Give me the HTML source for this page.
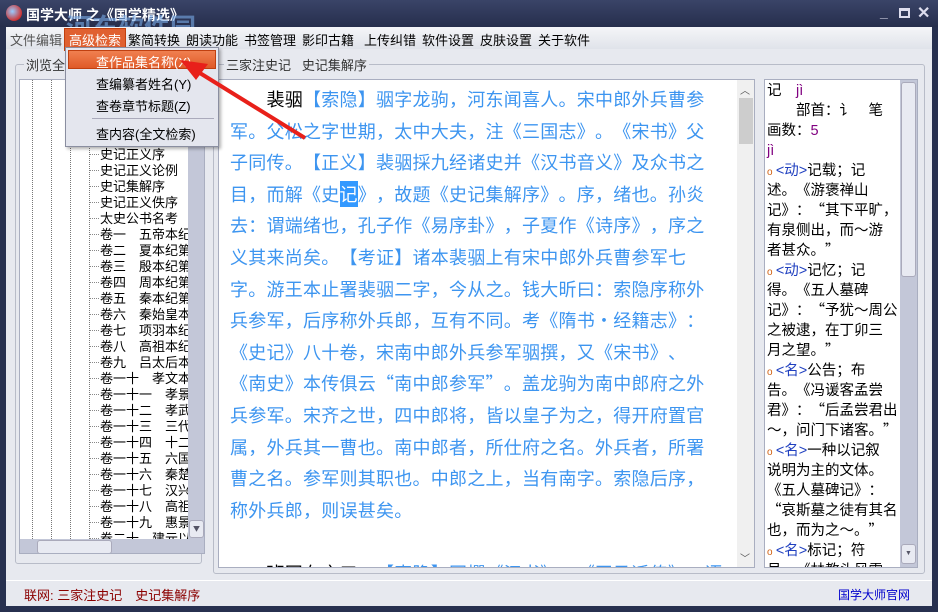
<!DOCTYPE html>
<html><head><meta charset="utf-8"><style>
*{margin:0;padding:0;box-sizing:border-box}
body{width:938px;height:612px;overflow:hidden;background:#27304f;font-family:"Liberation Sans","Noto Sans CJK SC",sans-serif;position:relative;text-spacing-trim:space-all}
.abs{position:absolute}
#title{left:0;top:0;width:938px;height:27px;background:linear-gradient(#3a4468,#262e4c);color:#fff;font-size:14px;font-weight:bold}
#client{left:6px;top:27px;width:926px;height:579px;background:#e7e9ef}
#menu{left:6px;top:27px;width:926px;height:22px;background:linear-gradient(#f4f5f8,#e0e3ea);font-size:13px}
#menu span{position:absolute;top:3px;color:#000}
.panel{background:#fff;border:1px solid #a9aec0}
#tree{left:19px;top:79px;width:186px;height:475px;overflow:hidden;font-size:13px;font-family:"Noto Sans CJK SC",sans-serif}
.row{position:absolute;left:80px;height:16px;line-height:16px;white-space:nowrap}
.row:before{content:"";position:absolute;left:-10px;top:8px;width:9px;border-top:1px dotted #888}
.vl{position:absolute;top:0;height:475px;border-left:1px dotted #777}
#main{left:218px;top:79px;width:537px;height:489px;overflow:hidden}
.cjk{font-family:"Noto Sans CJK SC",sans-serif;text-spacing-trim:space-all;font-feature-settings:"fwid" 1;font-variant-east-asian:full-width}
#mt{position:absolute;left:11px;top:4px;font-size:18px;line-height:31.6px;color:#3d95f0;white-space:nowrap;letter-spacing:0.25px}
#right{left:764px;top:79px;width:154px;height:489px;overflow:hidden}
#rt{position:absolute;left:2px;top:0;font-family:"Noto Sans CJK SC",sans-serif;text-spacing-trim:space-all;font-size:14.5px;white-space:nowrap;color:#000}
#rt div{height:20px;line-height:20px;overflow:visible}
.o{color:#d06010;font-size:10px;font-family:"Liberation Sans",sans-serif}
.tag{color:#2040c0;font-family:"Liberation Sans",sans-serif}
.py{color:#800080;font-family:"Liberation Sans",sans-serif}
#status{left:6px;top:580px;width:926px;height:26px;background:#e7e9ef;border-top:1px solid #fff;font-size:13px}
</style></head><body>
<div id="title" class="abs">
 <div class="abs" style="left:6px;top:5px;width:16px;height:16px;border-radius:50%;background:radial-gradient(circle at 40% 40%,#9cf,#c33 70%,#600)"></div>
 <div class="abs" style="left:26px;top:5px">国学大师 之《国学精选》</div>
 <div class="abs" style="left:66px;top:8px;color:rgba(120,170,230,.6);font-size:26px">河东软件园</div>
 <div class="abs" style="left:880px;top:4px;font-size:14px;color:#dde">_</div>
 <div class="abs" style="left:899px;top:8px;width:11px;height:10px;border:2px solid #dde;border-top-width:3px"></div>
 <div class="abs" style="left:917px;top:3px;font-size:16px;color:#dde">✕</div>
</div>
<div id="client" class="abs"></div>
<div id="menu" class="abs">
 <span style="left:4px;color:#555">文件编辑</span>
 <span style="left:58px;top:1px;background:#e06030;color:#fff;padding:1px 4px;border:1px solid #c04010">高级检索</span>
 <span style="left:122px">繁简转换</span><span style="left:180px">朗读功能</span><span style="left:238px">书签管理</span><span style="left:296px">影印古籍</span><span style="left:358px">上传纠错</span><span style="left:416px">软件设置</span><span style="left:474px">皮肤设置</span><span style="left:532px">关于软件</span>
</div>
<div class="abs" style="left:70px;top:51px;color:#6c6;font-size:16px;font-weight:bold;opacity:.7">www.pc0359.cn</div>
<div class="abs" style="left:15px;top:64px;width:187px;height:500px;border:1px solid #b8bcc8;border-radius:3px"></div>
<div class="abs" style="left:213px;top:64px;width:712px;height:510px;border:1px solid #b8bcc8;border-radius:3px"></div>
<div class="abs" style="left:24px;top:55px;font-size:13px;background:#e7e9ef;color:#333;padding:0 2px">浏览全部</div>
<div class="abs" style="left:224px;top:55px;font-size:13px;background:#e7e9ef;color:#333;padding:0 2px">三家注史记 &nbsp; 史记集解序</div>
<div id="tree" class="abs panel">
 <div class="vl" style="left:12px"></div><div class="vl" style="left:31px"></div><div class="vl" style="left:50px"></div><div class="vl" style="left:69px"></div>
 <div class="row" style="top:66px">史记正义序</div>
 <div class="row" style="top:82px">史记正义论例</div>
 <div class="row" style="top:98px">史记集解序</div>
 <div class="row" style="top:114px">史记正义佚序</div>
 <div class="row" style="top:130px">太史公书名考</div>
 <div class="row" style="top:146px">卷一　五帝本纪第一</div>
 <div class="row" style="top:162px">卷二　夏本纪第二</div>
 <div class="row" style="top:178px">卷三　殷本纪第三</div>
 <div class="row" style="top:194px">卷四　周本纪第四</div>
 <div class="row" style="top:210px">卷五　秦本纪第五</div>
 <div class="row" style="top:226px">卷六　秦始皇本纪</div>
 <div class="row" style="top:242px">卷七　项羽本纪第</div>
 <div class="row" style="top:258px">卷八　高祖本纪第</div>
 <div class="row" style="top:274px">卷九　吕太后本纪</div>
 <div class="row" style="top:290px">卷一十　孝文本纪</div>
 <div class="row" style="top:306px">卷一十一　孝景本</div>
 <div class="row" style="top:322px">卷一十二　孝武本</div>
 <div class="row" style="top:338px">卷一十三　三代世</div>
 <div class="row" style="top:354px">卷一十四　十二诸</div>
 <div class="row" style="top:370px">卷一十五　六国年</div>
 <div class="row" style="top:386px">卷一十六　秦楚之</div>
 <div class="row" style="top:402px">卷一十七　汉兴以</div>
 <div class="row" style="top:418px">卷一十八　高祖功</div>
 <div class="row" style="top:434px">卷一十九　惠景间</div>
 <div class="row" style="top:450px">卷二十　建元以来</div>
 <div class="row" style="top:466px">卷二十一　建元已</div>
 <div class="abs" style="left:168px;top:0;width:17px;height:459px;background:#c3c7d8"></div>
 <div class="abs" style="left:169px;top:0;width:15px;height:34px;background:#e8eaf2;border:1px solid #aab;border-radius:3px"></div>
 <div class="abs" style="left:169px;top:440px;width:15px;height:18px;background:#e8eaf2;border:1px solid #aab;border-radius:3px;font-size:7px;text-align:center;line-height:16px;color:#556">▼</div>
 <div class="abs" style="left:0;top:459px;width:185px;height:15px;background:#c3c7d8"></div>
 <div class="abs" style="left:17px;top:460px;width:75px;height:14px;background:#e8eaf2;border:1px solid #aab;border-radius:3px"></div>
</div>
<div id="main" class="abs panel">
 <div id="mt" class="cjk"><span style="color:#000">　　裴骃</span>【索隐】骃字龙驹，河东闻喜人。宋中郎外兵曹参<br>军。父松之字世期，太中大夫，注《三国志》。《宋书》父<br>子同传。【正义】裴骃採九经诸史并《汉书音义》及众书之<br>目，而解《史<span style="background:#3399ff;color:#fff">记</span>》，故题《史记集解序》。序，绪也。孙炎<br>去：谓端绪也，孔子作《易序卦》，子夏作《诗序》，序之<br>义其来尚矣。【考证】诸本裴骃上有宋中郎外兵曹参军七<br>字。游王本止署裴骃二字，今从之。钱大昕曰：索隐序称外<br>兵参军，后序称外兵郎，互有不同。考《隋书·经籍志》：<br>《史记》八十卷，宋南中郎外兵参军骃撰，又《宋书》、<br>《南史》本传俱云“南中郎参军”。盖龙驹为南中郎府之外<br>兵参军。宋齐之世，四中郎将，皆以皇子为之，得开府置官<br>属，外兵其一曹也。南中郎者，所仕府之名。外兵者，所署<br>曹之名。参军则其职也。中郎之上，当有南字。索隐后序，<br>称外兵郎，则误甚矣。<br><br><span style="color:#000">　　班固有言曰</span>，【索隐】固撰《汉书》，《司马迁传》，语</div>
 <div class="abs" style="left:518px;top:0;width:18px;height:487px;background:#f0f0f0"></div>
 <div class="abs" style="left:520px;top:18px;width:14px;height:46px;background:#cdcdcd"></div>
 <div class="abs" style="left:521px;top:2px;font-size:10px;color:#555">︿</div>
 <div class="abs" style="left:521px;top:470px;font-size:10px;color:#555">﹀</div>
</div>
<div id="right" class="abs panel">
 <div id="rt">
<div>记　<span class="py">jì</span></div>
<div>　　部首：讠　笔</div>
<div>画数：<span class="py">5</span></div>
<div><span class="py">jì</span></div>
<div><span class="o">o</span> <span class="tag">&lt;动&gt;</span>记载；记</div>
<div>述。《游褒禅山</div>
<div>记》：“其下平旷，</div>
<div>有泉侧出，而～游</div>
<div>者甚众。”</div>
<div><span class="o">o</span> <span class="tag">&lt;动&gt;</span>记忆；记</div>
<div>得。《五人墓碑</div>
<div>记》：“予犹～周公</div>
<div>之被逮，在丁卯三</div>
<div>月之望。”</div>
<div><span class="o">o</span> <span class="tag">&lt;名&gt;</span>公告；布</div>
<div>告。《冯谖客孟尝</div>
<div>君》：“后孟尝君出</div>
<div>～，问门下诸客。”</div>
<div><span class="o">o</span> <span class="tag">&lt;名&gt;</span>一种以记叙</div>
<div>说明为主的文体。</div>
<div>《五人墓碑记》：</div>
<div>“哀斯墓之徒有其名</div>
<div>也，而为之～。”</div>
<div><span class="o">o</span> <span class="tag">&lt;名&gt;</span>标记；符</div>
<div>号。《林教头风雪</div>
 </div>
 <div class="abs" style="left:135px;top:0;width:17px;height:487px;background:#c3c7d8"></div>
 <div class="abs" style="left:136px;top:2px;width:15px;height:195px;background:#e8eaf2;border:1px solid #aab;border-radius:3px"></div>
 <div class="abs" style="left:136px;top:464px;width:15px;height:20px;background:#e8eaf2;border:1px solid #aab;border-radius:3px;font-size:7px;text-align:center;line-height:18px;color:#556">▼</div>
</div>
<div class="abs" style="left:65px;top:47px;width:154px;height:100px;background:#e4e6ee;border:1px solid #8a8ea0;box-shadow:2px 2px 3px rgba(0,0,0,.3);font-size:13px">
 <div class="abs" style="left:2px;top:2px;width:148px;height:19px;background:linear-gradient(#f08050,#e05a28);border:1px solid #c04010"></div>
 <div class="abs" style="left:30px;top:4px;color:#fff">查作品集名称(X)</div>
 <div class="abs" style="left:30px;top:26px">查编纂者姓名(Y)</div>
 <div class="abs" style="left:30px;top:48px">查卷章节标题(Z)</div>
 <div class="abs" style="left:26px;top:70px;width:122px;border-top:1px solid #aab"></div>
 <div class="abs" style="left:30px;top:76px">查内容(全文检索)</div>
</div>
<svg class="abs" style="left:0;top:0" width="938" height="612"><line x1="305" y1="138" x2="195" y2="70" stroke="#e8201a" stroke-width="4"/><polygon points="180,60 208,64 196,80" fill="#e8201a"/></svg>
<div id="status" class="abs">
 <div class="abs" style="left:18px;top:4px;color:#8b0000">联网: 三家注史记　史记集解序</div>
 <div class="abs" style="left:832px;top:5px;color:#0000cc;font-size:12px">国学大师官网</div>
</div>
</body></html>
